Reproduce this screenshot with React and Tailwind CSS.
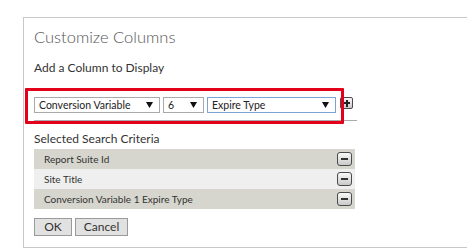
import React from "react";

function Arrow() {
  return (
    <svg width="7" height="6" viewBox="0 0 7 6" className="shrink-0">
      <path d="M0 0 H7 L3.5 6 Z" fill="#111" />
    </svg>
  );
}

function Select({ w, label, focused }) {
  return (
    <div
      className={`h-[16px] flex items-center justify-between pl-[4px] pr-[6px] bg-white border ${
        focused ? "border-[#7da2d6]" : "border-[#a9a9a9]"
      } text-[10.5px] text-[#222] ${w}`}
    >
      <span className="leading-none">{label}</span>
      <Arrow />
    </div>
  );
}

function MinusBtn() {
  return (
    <div className="w-[15px] h-[14px] rounded-[3px] border border-[#4a4a4a] bg-gradient-to-b from-[#fafafa] to-[#c9c9c9] flex items-center justify-center">
      <div className="w-[7px] h-[2px] bg-[#333]" />
    </div>
  );
}

function PlusBtn() {
  return (
    <div className="relative w-[13px] h-[12px] rounded-[2px] border border-[#4a4a4a] bg-gradient-to-b from-[#fafafa] to-[#c9c9c9]">
      <div className="absolute left-[2px] top-[4px] w-[7px] h-[2px] bg-[#222]" />
      <div className="absolute left-[4.5px] top-[1.5px] w-[2px] h-[7px] bg-[#222]" />
    </div>
  );
}

export default function App() {
  const rows = [
    { label: "Report Suite Id", bg: "bg-[#d6d6ce]" },
    { label: "Site Title", bg: "bg-[#efefef]" },
    { label: "Conversion Variable 1 Expire Type", bg: "bg-[#d6d6ce]" },
  ];
  return (
    <div className="w-[467px] h-[250px] overflow-hidden bg-white font-['Lato',sans-serif]">
      <div className="ml-[23px] mt-[17px] w-[470px] h-[231px] border border-r-0 border-[#c8c8c8] pl-[10px]">
        <div className="pt-[8px] text-[16.5px] leading-[22px] font-light text-[#555]">Customize Columns</div>
        <div className="mt-[12px] text-[12px] leading-[16px] text-[#333]">Add a Column to Display</div>
        <div className="relative mt-[21px] w-[323px] h-[24px] border-b border-[#aaa]">
          <div className="flex items-start gap-[3px]">
            <Select w="w-[126px]" label="Conversion Variable" />
            <Select w="w-[41px]" label="6" />
            <Select w="w-[129px]" label="Expire Type" focused />
            <div className="ml-[1px]">
              <PlusBtn />
            </div>
          </div>
          <div className="absolute left-[-9px] top-[-9px] w-[319px] h-[36px] border-[3px] border-[#e2001a] rounded-[1px]" />
        </div>
        <div className="mt-[10px] text-[12px] leading-[16px] text-[#333]">Selected Search Criteria</div>
        <div className="mt-[2px] w-[321px]">
          {rows.map((r) => (
            <div key={r.label} className={`h-[20px] flex items-center justify-between pl-[10px] pr-[3px] ${r.bg}`}>
              <span className="text-[10px] text-[#333]">{r.label}</span>
              <MinusBtn />
            </div>
          ))}
        </div>
        <div className="mt-[9px] flex gap-[3px]">
          <div className="w-[38px] h-[18px] border border-[#9a9a9a] bg-[#e1e1e1] flex items-center justify-center text-[12px] text-[#333]">OK</div>
          <div className="w-[53px] h-[18px] border border-[#9a9a9a] bg-[#e1e1e1] flex items-center justify-center text-[12px] text-[#333]">Cancel</div>
        </div>
      </div>
    </div>
  );
}
